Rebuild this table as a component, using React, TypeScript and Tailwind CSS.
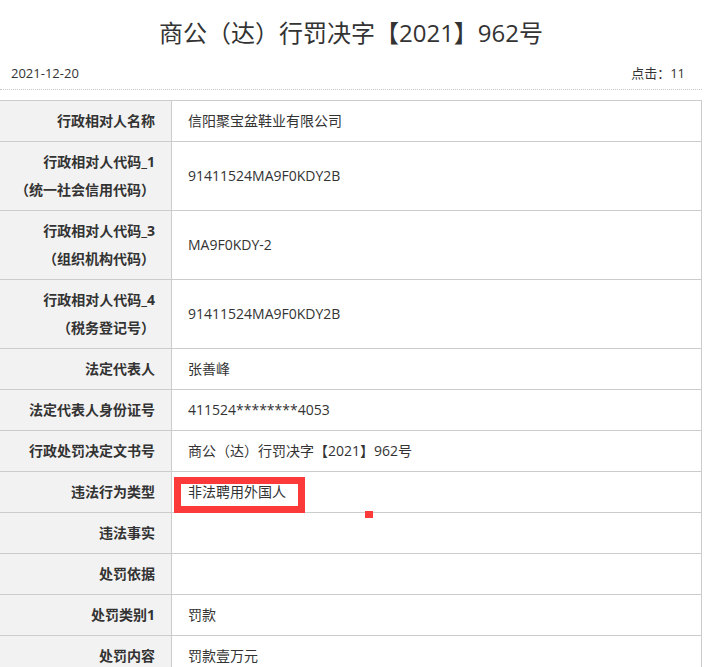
import React from "react";

const rows: { label: string[]; value: string; mark?: boolean }[] = [
  { label: ["行政相对人名称"], value: "信阳聚宝盆鞋业有限公司" },
  { label: ["行政相对人代码_1", "（统一社会信用代码）"], value: "91411524MA9F0KDY2B" },
  { label: ["行政相对人代码_3", "（组织机构代码）"], value: "MA9F0KDY-2" },
  { label: ["行政相对人代码_4", "（税务登记号）"], value: "91411524MA9F0KDY2B" },
  { label: ["法定代表人"], value: "张善峰" },
  { label: ["法定代表人身份证号"], value: "411524********4053" },
  { label: ["行政处罚决定文书号"], value: "商公（达）行罚决字【2021】962号" },
  { label: ["违法行为类型"], value: "非法聘用外国人", mark: true },
  { label: ["违法事实"], value: "" },
  { label: ["处罚依据"], value: "" },
  { label: ["处罚类别1"], value: "罚款" },
  { label: ["处罚内容"], value: "罚款壹万元" },
];

export default function App() {
  return (
    <div
      className="w-[702px] bg-white text-[#333]"
      style={{ fontFamily: '"Open Sans", "Noto Sans CJK SC", sans-serif' }}
    >
      <div className="pt-[15px]">
        <h1 className="text-center text-[24px] leading-[36px] font-normal text-[#333]">
          商公（达）行罚决字【2021】962号
        </h1>
      </div>
      <div className="mt-[12px] flex justify-between pl-[11px] pr-[17px] pb-[6px] text-[13px] leading-[20px] border-b border-dotted border-[#c8c8c8]">
        <span>2021-12-20</span>
        <span>点击：11</span>
      </div>
      <div className="mt-[10px] border-t border-r border-[#cccccc]">
        {rows.map((r, i) => (
          <div key={i} className="flex border-b border-[#cccccc]">
            <div className="w-[172px] shrink-0 bg-[#f2f2f2] border-r border-[#cccccc] pr-4 py-1.5 text-right text-[14px] leading-[28px] font-bold">
              {r.label.map((l, j) => (
                <div key={j}>{l}</div>
              ))}
            </div>
            <div className="relative flex flex-1 items-center pl-4 text-[14px] leading-[28px]">
              <span>{r.value}</span>
              {r.mark && (
                <>
                  <div className="absolute left-[2px] top-[5px] w-[131px] h-[36px] border-[7px] border-[#fc3a3a]" />
                  <div className="absolute left-[193px] top-[39px] w-[8px] h-[7px] bg-[#fc3a3a]" />
                </>
              )}
            </div>
          </div>
        ))}
      </div>
    </div>
  );
}
